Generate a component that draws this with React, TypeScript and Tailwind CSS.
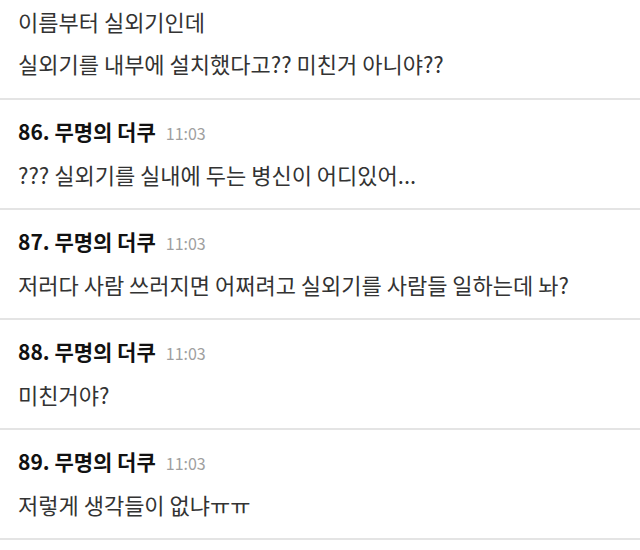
import React from "react";

const posts = [
  { no: "86.", body: "??? 실외기를 실내에 두는 병신이 어디있어..." },
  { no: "87.", body: "저러다 사람 쓰러지면 어쩌려고 실외기를 사람들 일하는데 놔?" },
  { no: "88.", body: "미친거야?" },
  { no: "89.", body: "저렇게 생각들이 없냐ㅠㅠ" },
];

export default function App() {
  return (
    <div
      className="w-[640px] h-[550px] overflow-hidden bg-white"
      style={{ fontFamily: '"Noto Sans CJK KR", "Noto Sans", sans-serif' }}
    >
      <div className="border-b-2 border-[#e4e4e4] pl-[18px] pb-[14px] text-[22px] leading-[42px] text-[#333]">
        <div>이름부터 실외기인데</div>
        <div>실외기를 내부에 설치했다고?? 미친거 아니야??</div>
      </div>
      {posts.map((p) => (
        <div
          key={p.no}
          className="border-b-2 border-[#e4e4e4] pl-[18px] pt-[16px] pb-[19px]"
        >
          <div className="flex items-baseline h-[30px] leading-[30px]">
            <span className="text-[21px] font-bold text-[#111]">
              {p.no} 무명의 더쿠
            </span>
            <span className="ml-[10px] text-[16px] text-[#a0a0a0]">11:03</span>
          </div>
          <div className="mt-[13px] text-[22px] leading-[30px] text-[#333]">
            {p.body}
          </div>
        </div>
      ))}
    </div>
  );
}
